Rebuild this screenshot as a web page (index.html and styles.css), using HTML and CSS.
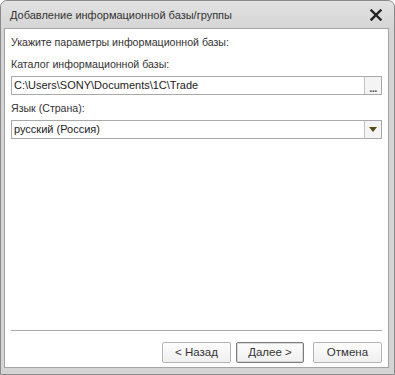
FILE: index.html
```html
<!DOCTYPE html>
<html lang="ru">
<head>
  <meta charset="UTF-8">
  <title>Добавление информационной базы/группы</title>
  <link rel="stylesheet" href="styles.css">
</head>
<body>
  <div class="window">
    <div class="titlebar">
      <span class="title">Добавление информационной базы/группы</span>
      <svg class="close" width="12" height="12" viewBox="0 0 12 12">
        <path d="M1.5 1.5 L10.5 10.5 M10.5 1.5 L1.5 10.5" stroke="#222" stroke-width="2.4" stroke-linecap="square"/>
      </svg>
    </div>
    <div class="client">
      <div class="label first">Укажите параметры информационной базы:</div>
      <div class="label">Каталог информационной базы:</div>
      <div class="field">
        <div class="value">C:\Users\SONY\Documents\1C\Trade</div>
        <div class="side-btn dots">...</div>
      </div>
      <div class="label">Язык (Страна):</div>
      <div class="field">
        <div class="value">русский (Россия)</div>
        <div class="side-btn">
          <svg width="8" height="5" viewBox="0 0 8 5"><path d="M0 0 L8 0 L4 5 Z" fill="#5a4a14"/></svg>
        </div>
      </div>
      <div class="spacer"></div>
      <div class="separator"></div>
      <div class="buttons">
        <div class="btn">&lt; Назад</div>
        <div class="btn default">Далее &gt;</div>
        <div class="btn">Отмена</div>
      </div>
    </div>
  </div>
</body>
</html>
```

FILE: styles.css
```css
body {
  margin: 0;
  background: #fff;
  font-family: "Liberation Sans", Arial, sans-serif;
  font-size: 11px;
  color: #333;
}
.window {
  width: 395px;
  height: 375px;
  box-sizing: border-box;
  border: 1px solid #8a8a8a;
  border-radius: 7px 7px 0 0;
  background: linear-gradient(#e2e2e2, #d4d4d4 30px, #d4d4d4);
  padding: 0 5px 6px 3px;
  display: flex;
  flex-direction: column;
}
.titlebar {
  height: 27px;
  display: flex;
  align-items: center;
  justify-content: space-between;
  padding: 0 7px 0 6px;
}
.title {
  color: #333;
  font-size: 11px;
}
.close {
  display: block;
}
.client {
  flex: 1;
  background: #fff;
  border: 1px solid #a4a4a4;
  padding: 6px 6px 4px 6px;
  display: flex;
  flex-direction: column;
}
.label {
  line-height: 15px;
  margin-top: 7px;
  font-size: 10.6px;
}
.label.first {
  margin-top: 0;
}
.field {
  display: flex;
  height: 19px;
  box-sizing: border-box;
  border: 1px solid #a9a9a9;
  margin-top: 4px;
}
.field + .label {
  margin-top: 6px;
}
.value {
  flex: 1;
  line-height: 17px;
  padding-left: 2px;
  color: #222;
}
.side-btn {
  width: 16px;
  border-left: 1px solid #c4c4c4;
  background: #f4f4f4;
  display: flex;
  align-items: center;
  justify-content: center;
}
.side-btn.dots {
  align-items: flex-end;
  line-height: 12px;
  font-weight: bold;
  color: #555;
  letter-spacing: -0.5px;
}
.spacer {
  flex: 1;
}
.separator {
  height: 1px;
  background: #a8a8a8;
  margin-bottom: 11px;
}
.buttons {
  display: flex;
  justify-content: flex-end;
  gap: 5px;
}
.btn {
  width: 69px;
  height: 21px;
  box-sizing: border-box;
  border: 1px solid #b4b4b4;
  border-radius: 2px;
  background: linear-gradient(#fdfdfd, #efefef);
  text-align: center;
  line-height: 19px;
  color: #333;
  font-size: 11.5px;
}
.btn.default {
  width: 68px;
  border: 1px solid #7c7c7c;
  box-shadow: inset 0 0 0 1px #d8d8d8;
  margin-right: 4px;
}
```
